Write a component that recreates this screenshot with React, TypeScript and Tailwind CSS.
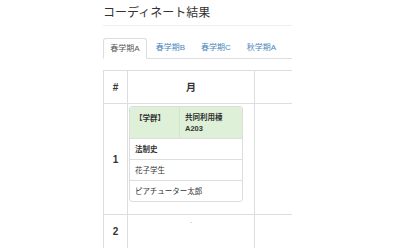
const tabs = ['春学期A', '春学期B', '春学期C', '秋学期A'];

function LessonCard() {
  return (
    <div className="mt-[2px] ml-[1px] w-[114px] rounded-[3px] border border-[#ddd] overflow-hidden text-[7.5px] leading-[11px] text-[#333]">
      <div className="flex h-[32px] bg-[#dff0d8] border-b border-[#ddd]">
        <div className="w-[50px] pl-[5px] pt-[6px] font-bold border-r border-[#d0e6c6]">【学群】</div>
        <div className="flex-1 pl-[5px] pt-[5px] font-bold">
          <div>共同利用棟</div>
          <div>A203</div>
        </div>
      </div>
      <div className="h-[21px] flex items-center pl-[5px] font-bold border-b border-[#ddd]">法制史</div>
      <div className="h-[21px] flex items-center pl-[5px] border-b border-[#ddd]">花子学生</div>
      <div className="h-[20px] flex items-center pl-[5px]">ピアチューター太郎</div>
    </div>
  );
}

export default function App() {
  return (
    <div className="w-[399px] h-[248px] bg-white overflow-hidden font-['Liberation_Sans','Noto_Sans_CJK_JP',sans-serif] text-[#333]">
      <div className="ml-[103px] w-[189px] overflow-hidden">
        <div className="h-[26px] pt-[5px] border-b border-[#eee] text-[12px] leading-[16px] text-[#333] whitespace-nowrap">
          コーディネート結果
        </div>

        <div className="mt-[12px] flex h-[21px] border-b border-[#ddd] text-[8px] whitespace-nowrap">
          {tabs.map((t, i) =>
            i === 0 ? (
              <div
                key={t}
                className="w-[44px] mr-[1.5px] -mb-px flex items-center justify-center rounded-t-[3px] border border-[#ddd] border-b-white bg-white text-[#555]"
              >
                {t}
              </div>
            ) : (
              <div key={t} className="w-[44px] mr-[1.5px] flex items-center justify-center text-[#4a86bd]">
                {t}
              </div>
            )
          )}
        </div>

        <table className="mt-[11px] border-collapse text-[10px] text-[#333] table-fixed w-[240px]">
          <colgroup>
            <col className="w-[24px]" />
            <col className="w-[127px]" />
            <col className="w-[89px]" />
          </colgroup>
          <thead>
            <tr className="h-[33px]">
              <th className="border border-[#ddd] font-bold text-center">#</th>
              <th className="border border-[#ddd] font-bold text-center">月</th>
              <th className="border border-[#ddd]"></th>
            </tr>
          </thead>
          <tbody>
            <tr className="h-[109px]">
              <td className="border border-[#ddd] font-bold text-center">1</td>
              <td className="border border-[#ddd] align-top p-0 pb-[12px]">
                <LessonCard />
              </td>
              <td className="border border-[#ddd]"></td>
            </tr>
            <tr className="h-[34px]">
              <td className="border border-[#ddd] font-bold text-center">2</td>
              <td className="border border-[#ddd] align-top text-center text-[6px] leading-[6px] pt-[4px] text-[#999]">-</td>
              <td className="border border-[#ddd]"></td>
            </tr>
          </tbody>
        </table>
      </div>
    </div>
  );
}
